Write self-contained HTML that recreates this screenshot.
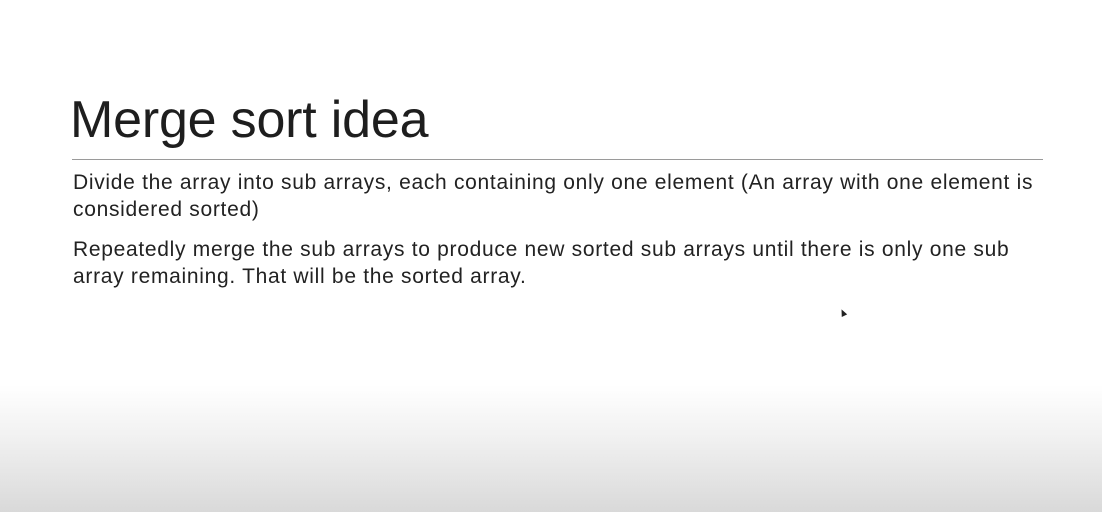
<!DOCTYPE html>
<html><head><style>
html,body{margin:0;padding:0}
body{width:1102px;height:512px;position:relative;overflow:hidden;background:linear-gradient(to bottom,#fff 0,#fff 385px,#f0f0f0 440px,#d9d9d9 512px);font-family:"Liberation Sans",sans-serif;color:#222}
h1{position:absolute;left:70px;top:88px;margin:0;font-weight:normal;font-size:52px;letter-spacing:-0.2px;line-height:64px;color:#1e1e1e}
.rule{position:absolute;left:72px;top:159px;width:971px;height:1px;background:#9a9a9a}
p{position:absolute;left:73px;margin:0;font-size:21px;letter-spacing:0.7px;line-height:27px;white-space:nowrap}
.cur{position:absolute;left:840px;top:309px;width:0;height:0;border-left:3px solid transparent;border-right:3px solid transparent;border-bottom:7px solid #222;transform:rotate(-25deg)}
</style></head><body>
<h1>Merge sort idea</h1>
<div class="rule"></div>
<p style="top:169px">Divide the array into sub arrays, each containing only one element (An array with one element is<br>considered sorted)</p>
<p style="top:236px">Repeatedly merge the sub arrays to produce new sorted sub arrays until there is only one sub<br>array remaining. That will be the sorted array.</p>
<div class="cur"></div>
</body></html>
